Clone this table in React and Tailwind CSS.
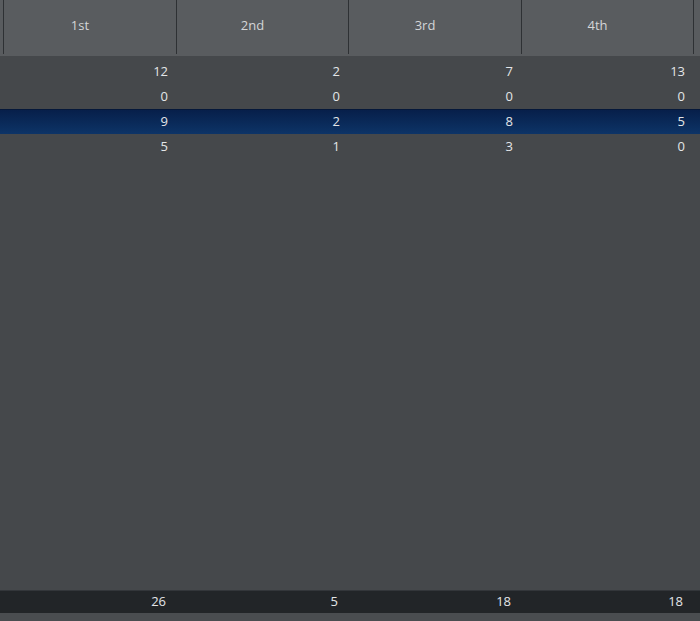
const cols = ["1st", "2nd", "3rd", "4th"];

const rows = [
  [12, 2, 7, 13],
  [0, 0, 0, 0],
  [9, 2, 8, 5],
  [5, 1, 3, 0],
];

const totals = [26, 5, 18, 18];

const font = { fontFamily: '"Open Sans", "Noto Sans", sans-serif' };

export default function App() {
  return (
    <div
      className="w-[700px] h-[621px] flex flex-col bg-[#45484b] text-[13px] overflow-hidden"
      style={font}
    >
      {/* header */}
      <div className="h-[56px] flex bg-[#595c5f] text-[#d4d6d8]">
        <div className="w-[4px] h-[54px] border-r border-[#2e3134]" />
        {cols.map((c, i) => (
          <div
            key={c}
            className={`h-[54px] flex items-center justify-center pr-[20px] pb-[3px] border-r border-[#2e3134] ${
              i % 2 === 0 ? "w-[173px]" : "w-[172px]"
            }`}
          >
            {c}
          </div>
        ))}
      </div>

      {/* body */}
      <div className="flex-1 flex flex-col pt-[3px] text-[#e4e6e8]">
        {rows.map((r, ri) => (
          <div
            key={ri}
            className={`h-[25px] flex items-center ${
              ri === 2
                ? "bg-gradient-to-b from-[#071f4a] to-[#0d3467] border-t border-[#05183a]"
                : ""
            }`}
          >
            <div className="w-[4px]" />
            {r.map((v, ci) => (
              <div
                key={ci}
                className={`text-right pr-[9px] ${
                  ci % 2 === 0 ? "w-[173px]" : "w-[172px]"
                }`}
              >
                {v}
              </div>
            ))}
          </div>
        ))}
      </div>

      {/* totals */}
      <div className="h-[23px] flex items-center bg-[#222528] border-t border-[#33363a] text-[#e4e6e8]">
        <div className="w-[4px]" />
        {totals.map((v, ci) => (
          <div
            key={ci}
            className={`text-right pr-[11px] ${
              ci % 2 === 0 ? "w-[173px]" : "w-[172px]"
            }`}
          >
            {v}
          </div>
        ))}
      </div>
      <div className="h-[8px] bg-[#4a4d50]" />
    </div>
  );
}
